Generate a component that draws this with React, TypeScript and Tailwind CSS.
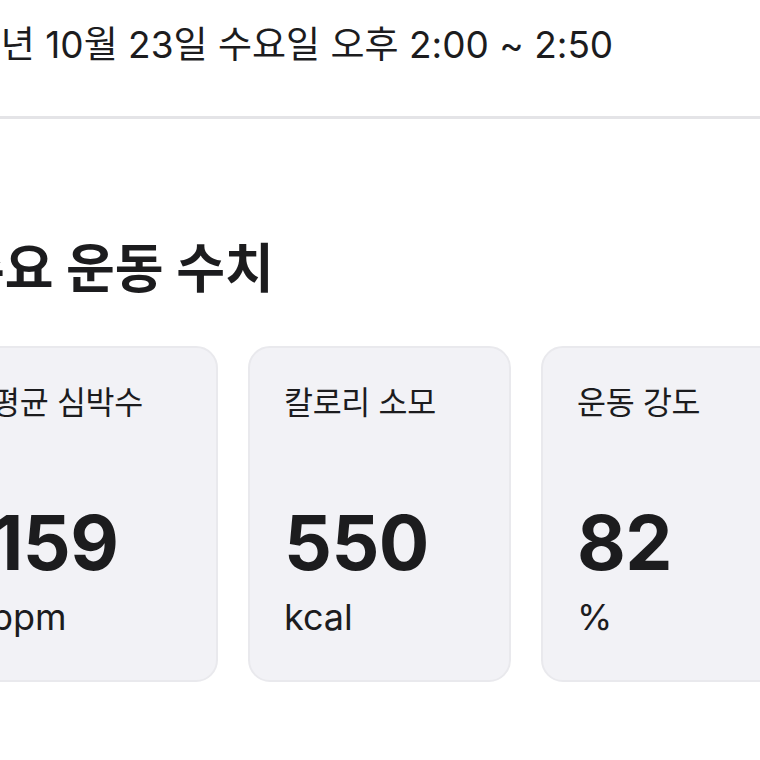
import React from "react";

const latin = { fontFamily: 'Inter, "Noto Sans CJK KR", sans-serif' };

function Card({ label, value, unit }: { label: string; value: string; unit: string }) {
  return (
    <div className="w-[263px] h-[336px] shrink-0 rounded-[22px] bg-[#f2f2f6] border-2 border-[#e9e9ed] pl-[34px] pt-[34px] flex flex-col">
      <div className="text-[31.5px] leading-[42px] text-[#1c1c1e] tracking-[-0.3px]">{label}</div>
      <div className="mt-[79px] text-[75px] leading-[80px] font-bold text-[#1c1c1e] tracking-[-0.5px]">{value}</div>
      <div className="mt-[12px] text-[36px] leading-[44px] text-[#1c1c1e]">{unit}</div>
    </div>
  );
}

export default function App() {
  return (
    <div className="w-[760px] h-[760px] overflow-hidden bg-white" style={latin}>
      <div className="h-[116px] flex items-start">
        <div className="ml-[-91px] mt-[23px] text-[37px] leading-[44px] text-[#1c1c1e] whitespace-nowrap">
          2024년 10월 23일 수요일 오후 2:00 ~ 2:50
        </div>
      </div>
      <div className="h-[3px] bg-[#e4e4e7]" />
      <div className="ml-[-45px]">
        <h2 className="mt-[120px] ml-[1px] text-[53px] leading-[60px] font-bold text-[#1c1c1e] whitespace-nowrap">
          주요 운동 수치
        </h2>
        <div className="mt-[47px] flex gap-[30px]">
          <Card label="평균 심박수" value="159" unit="bpm" />
          <Card label="칼로리 소모" value="550" unit="kcal" />
          <Card label="운동 강도" value="82" unit="%" />
        </div>
      </div>
    </div>
  );
}
